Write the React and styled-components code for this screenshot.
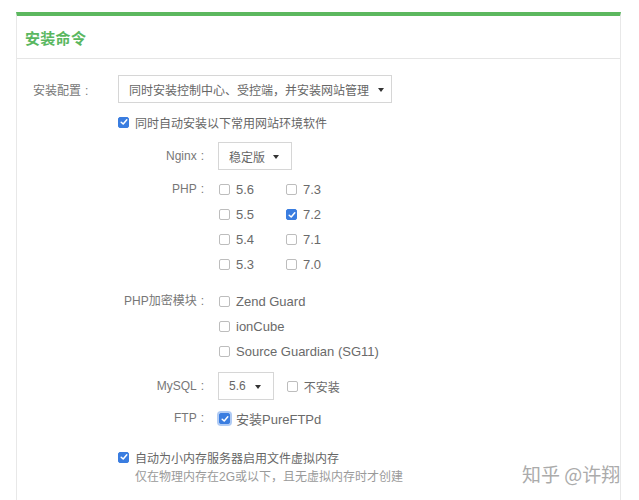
import React from "react";
import styled, { createGlobalStyle, css } from "styled-components";

const GlobalStyle = createGlobalStyle`
  * { box-sizing: border-box; }
  html, body { margin: 0; padding: 0; background: #fff; }
  body {
    font-family: "Liberation Sans", "Noto Sans CJK SC", sans-serif;
    font-size: 12px;
    color: #777;
    overflow: hidden;
  }
`;

const Page = styled.div`
  position: relative;
  width: 639px;
  height: 500px;
  padding: 12px 0 0 16px;
  overflow: hidden;
`;

const Panel = styled.section`
  width: 605px;
  min-height: 520px;
  border-top: 4px solid #5cb85f;
  border-left: 1px solid #e8e8e8;
  border-right: 1px solid #e8e8e8;
`;

const Header = styled.header`
  height: 43px;
  display: flex;
  align-items: center;
  padding-left: 8px;
  border-bottom: 1px solid #e5e5e5;
`;

const Title = styled.h2`
  margin: 0;
  font-size: 15px;
  font-weight: bold;
  color: #5ab760;
  letter-spacing: 0.3px;
`;

const Body = styled.div`
  padding: 16px 0 0 16px;
`;

const TopRow = styled.div`
  display: flex;
  align-items: center;
  height: 28px;
`;

const TopLabel = styled.label`
  width: 85px;
  color: #777;
`;

const Colon = styled.span`
  margin-left: 4px;
`;

const Select = styled.div`
  display: inline-flex;
  align-items: center;
  height: 28px;
  padding: 0 ${(p) => p.$pr || 12}px 0 10px;
  border: 1px solid #d6d6d6;
  background: #fff;
  color: #666;
  gap: ${(p) => p.$gap || 10}px;
  white-space: nowrap;
  flex-shrink: 0;
`;

const Caret = styled.span`
  width: 0;
  height: 0;
  border-left: 3px solid transparent;
  border-right: 3px solid transparent;
  border-top: 4px solid #333;
  margin-top: 1px;
`;

const SubForm = styled.div`
  margin-left: 85px;
  margin-top: 9px;
`;

const CheckLine = styled.label`
  display: flex;
  align-items: center;
  height: 20px;
  color: #666;
  margin-top: ${(p) => p.$mt || 0}px;
  white-space: nowrap;
`;

const Hint = styled.div`
  height: 20px;
  line-height: 20px;
  padding-left: 17px;
  color: #9a9a9a;
`;

const Box = styled.span`
  width: 11px;
  height: 11px;
  border-radius: 2px;
  border: 1px solid #bdbdbd;
  background: #fff;
  margin-right: 6px;
  display: inline-flex;
  align-items: center;
  justify-content: center;
  flex-shrink: 0;
  ${(p) =>
    p.$checked &&
    css`
      background: #3a7de0;
      border-color: #3a7de0;
    `}
  ${(p) =>
    p.$focus &&
    css`
      box-shadow: 0 0 0 2px rgba(80, 140, 230, 0.45);
    `}
`;

const FieldRow = styled.div`
  display: grid;
  grid-template-columns: 100px 1fr;
  align-items: ${(p) => (p.$top ? "start" : "center")};
  margin-top: ${(p) => p.$mt || 0}px;
`;

const FieldLabel = styled.div`
  text-align: right;
  padding-right: 14px;
  color: #777;
  white-space: nowrap;
  line-height: 25px;
`;

const Inline = styled.div`
  display: flex;
  align-items: center;
  gap: 12px;
`;

const VersionGrid = styled.div`
  display: grid;
  grid-template-columns: 67px 67px;
  grid-auto-rows: 25px;
  align-items: center;
`;

const Stack = styled.div`
  display: grid;
  grid-auto-rows: 25px;
  align-items: center;
`;

const Option = styled.label`
  display: flex;
  align-items: center;
  padding-left: 1px;
  color: #6a6a6a;
  font-size: ${(p) => p.$size || 13}px;
  white-space: nowrap;
`;

const Watermark = styled.div`
  position: absolute;
  left: 522px;
  top: 460px;
  font-size: 19px;
  color: #ababab;
  font-family: "Noto Sans CJK SC", sans-serif;
  white-space: nowrap;
`;

function Check({ checked, focus }) {
  return (
    <Box $checked={checked} $focus={focus}>
      {checked && (
        <svg width="8" height="8" viewBox="0 0 8 8">
          <path d="M1.2 4.2 L3.2 6 L6.8 1.8" fill="none" stroke="#fff" strokeWidth="1.5" strokeLinecap="round" strokeLinejoin="round" />
        </svg>
      )}
    </Box>
  );
}

const php = [
  ["5.6", false, "7.3", false],
  ["5.5", false, "7.2", true],
  ["5.4", false, "7.1", false],
  ["5.3", false, "7.0", false],
];

export default function App() {
  return (
    <>
      <GlobalStyle />
      <Page>
        <Panel>
          <Header>
            <Title>安装命令</Title>
          </Header>
          <Body>
            <TopRow>
              <TopLabel>
                安装配置<Colon>:</Colon>
              </TopLabel>
              <Select $gap={9} $pr={7}>
                同时安装控制中心、受控端，并安装网站管理
                <Caret />
              </Select>
            </TopRow>
            <SubForm>
              <CheckLine>
                <Check checked />
                同时自动安装以下常用网站环境软件
              </CheckLine>

              <FieldRow $mt={10}>
                <FieldLabel>
                  Nginx<Colon>:</Colon>
                </FieldLabel>
                <div>
                  <Select $gap={8}>
                    稳定版
                    <Caret />
                  </Select>
                </div>
              </FieldRow>

              <FieldRow $mt={7} $top>
                <FieldLabel>
                  PHP<Colon>:</Colon>
                </FieldLabel>
                <VersionGrid>
                  {php.map(([a, ac, b, bc]) => (
                    <React.Fragment key={a}>
                      <Option>
                        <Check checked={ac} />
                        {a}
                      </Option>
                      <Option>
                        <Check checked={bc} />
                        {b}
                      </Option>
                    </React.Fragment>
                  ))}
                </VersionGrid>
              </FieldRow>

              <FieldRow $mt={12} $top>
                <FieldLabel>
                  PHP加密模块<Colon>:</Colon>
                </FieldLabel>
                <Stack>
                  <Option>
                    <Check />
                    Zend Guard
                  </Option>
                  <Option>
                    <Check />
                    ionCube
                  </Option>
                  <Option>
                    <Check />
                    Source Guardian (SG11)
                  </Option>
                </Stack>
              </FieldRow>

              <FieldRow $mt={8}>
                <FieldLabel>
                  MySQL<Colon>:</Colon>
                </FieldLabel>
                <Inline>
                  <Select $gap={9}>
                    5.6
                    <Caret />
                  </Select>
                  <Option $size={12}>
                    <Check />
                    不安装
                  </Option>
                </Inline>
              </FieldRow>

              <FieldRow $mt={6}>
                <FieldLabel>
                  FTP<Colon>:</Colon>
                </FieldLabel>
                <Option>
                  <Check checked focus />
                  安装PureFTPd
                </Option>
              </FieldRow>

              <CheckLine $mt={16}>
                <Check checked />
                自动为小内存服务器启用文件虚拟内存
              </CheckLine>
              <Hint>仅在物理内存在2G或以下，且无虚拟内存时才创建</Hint>
            </SubForm>
          </Body>
        </Panel>
        <Watermark>知乎 @许翔</Watermark>
      </Page>
    </>
  );
}
